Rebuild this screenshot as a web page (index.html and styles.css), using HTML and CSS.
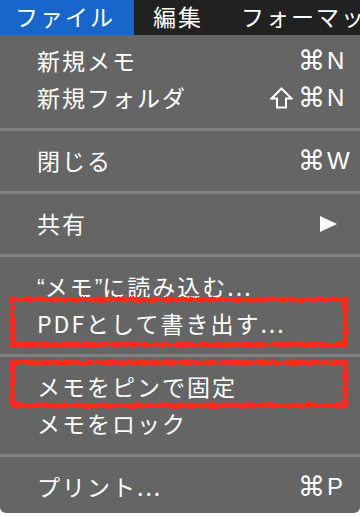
FILE: index.html
```html
<!DOCTYPE html>
<html lang="ja">

<head>
  <meta charset="UTF-8">
  <meta name="viewport" content="width=device-width, initial-scale=1.0">
  <title>ファイル メニュー</title>
  <link rel="stylesheet" href="styles.css">
</head>

<body>
  <svg class="defs" width="0" height="0">
    <filter id="rough">
      <feTurbulence type="fractalNoise" baseFrequency="0.8" numOctaves="2" seed="3" />
      <feDisplacementMap in="SourceGraphic" scale="5" />
    </filter>
  </svg>

  <div class="menubar">
    <span class="mb-item active">ファイル</span>
    <span class="mb-item">編集</span>
    <span class="mb-item">フォーマット</span>
  </div>

  <ul class="menu">
    <li class="item"><span class="label">新規メモ</span><span class="mods"></span><span class="key"><i class="cmd">⌘</i>N</span></li>
    <li class="item">
      <span class="label">新規フォルダ</span>
      <span class="mods">
        <svg class="shift" width="23" height="22" viewBox="0 0 23 22">
          <path d="M11.5 1.5 L21.5 11.5 L16 11.5 L16 20.5 L7 20.5 L7 11.5 L1.5 11.5 Z" fill="none" stroke="#fff" stroke-width="2" stroke-linejoin="miter" />
        </svg>
      </span>
      <span class="key"><i class="cmd">⌘</i>N</span>
    </li>
    <li class="sep"></li>
    <li class="item"><span class="label">閉じる</span><span class="mods"></span><span class="key"><i class="cmd">⌘</i>W</span></li>
    <li class="sep"></li>
    <li class="item">
      <span class="label">共有</span>
      <span class="mods"></span>
      <span class="key arrow">
        <svg width="17" height="16" viewBox="0 0 17 16"><path d="M0 0 L17 8 L0 16 Z" fill="#fff" /></svg>
      </span>
    </li>
    <li class="sep"></li>
    <li class="item"><span class="label"><span class="q">“</span>メモ<span class="q">”</span>に読み込む...</span><span class="mods"></span><span class="key"></span></li>
    <li class="item marked"><span class="label">PDFとして書き出す...</span><span class="mods"></span><span class="key"></span></li>
    <li class="sep"></li>
    <li class="item marked"><span class="label">メモをピンで固定</span><span class="mods"></span><span class="key"></span></li>
    <li class="item"><span class="label">メモをロック</span><span class="mods"></span><span class="key"></span></li>
    <li class="sep"></li>
    <li class="item"><span class="label">プリント...</span><span class="mods"></span><span class="key"><i class="cmd">⌘</i>P</span></li>
  </ul>
</body>

</html>
```

FILE: styles.css
```css
* {
  box-sizing: border-box;
}

body {
  margin: 0;
  background: #fff;
  font-family: "Noto Sans CJK JP", "Noto Sans", sans-serif;
  color: #fff;
  overflow: hidden;
}

.defs {
  display: block;
  width: 0;
  height: 0;
}

.menubar {
  display: flex;
  height: 35px;
  background: #212121;
  font-size: 23px;
  letter-spacing: 2px;
  line-height: 32px;
  white-space: nowrap;
  overflow: hidden;
}

.mb-item {
  flex-shrink: 0;
  padding: 0 19px 0 19px;
}

.mb-item:first-child {
  padding-left: 15px;
}

.mb-item.active {
  background: #1866cc;
}

.menu {
  list-style: none;
  margin: 0;
  padding: 7px 0 8px;
  background: #656565;
  border-radius: 0 0 6px 6px;
  font-size: 23px;
}

.item {
  position: relative;
  display: grid;
  grid-template-columns: 1fr auto 62px;
  column-gap: 5px;
  align-items: center;
  height: 37px;
  padding-left: 37px;
  line-height: 37px;
  white-space: nowrap;
}

.label {
  letter-spacing: 2px;
}

.label .q {
  font-family: "Liberation Sans", sans-serif;
  letter-spacing: 0;
}

.mods {
  display: flex;
  justify-content: flex-end;
}

.shift {
  display: block;
}

.key {
  display: flex;
  align-items: center;
  font-family: "Liberation Sans", sans-serif;
  font-size: 24px;
}

.cmd {
  font-style: normal;
  font-family: "DejaVu Sans", sans-serif;
  font-size: 27px;
  margin-right: 2px;
}

.key.arrow {
  padding-left: 22px;
}

.key.arrow svg {
  display: block;
}

.sep {
  height: 26px;
  display: flex;
  align-items: center;
}

.sep::before {
  content: "";
  flex: 1;
  height: 3px;
  background: #828282;
}

.marked::after {
  content: "";
  position: absolute;
  top: -8px;
  right: 12px;
  bottom: -5px;
  left: 10px;
  border: 5px solid #ff2a1c;
  filter: url(#rough);
  pointer-events: none;
}

.marked + .sep + .marked::after {
  bottom: -3px;
}
```
